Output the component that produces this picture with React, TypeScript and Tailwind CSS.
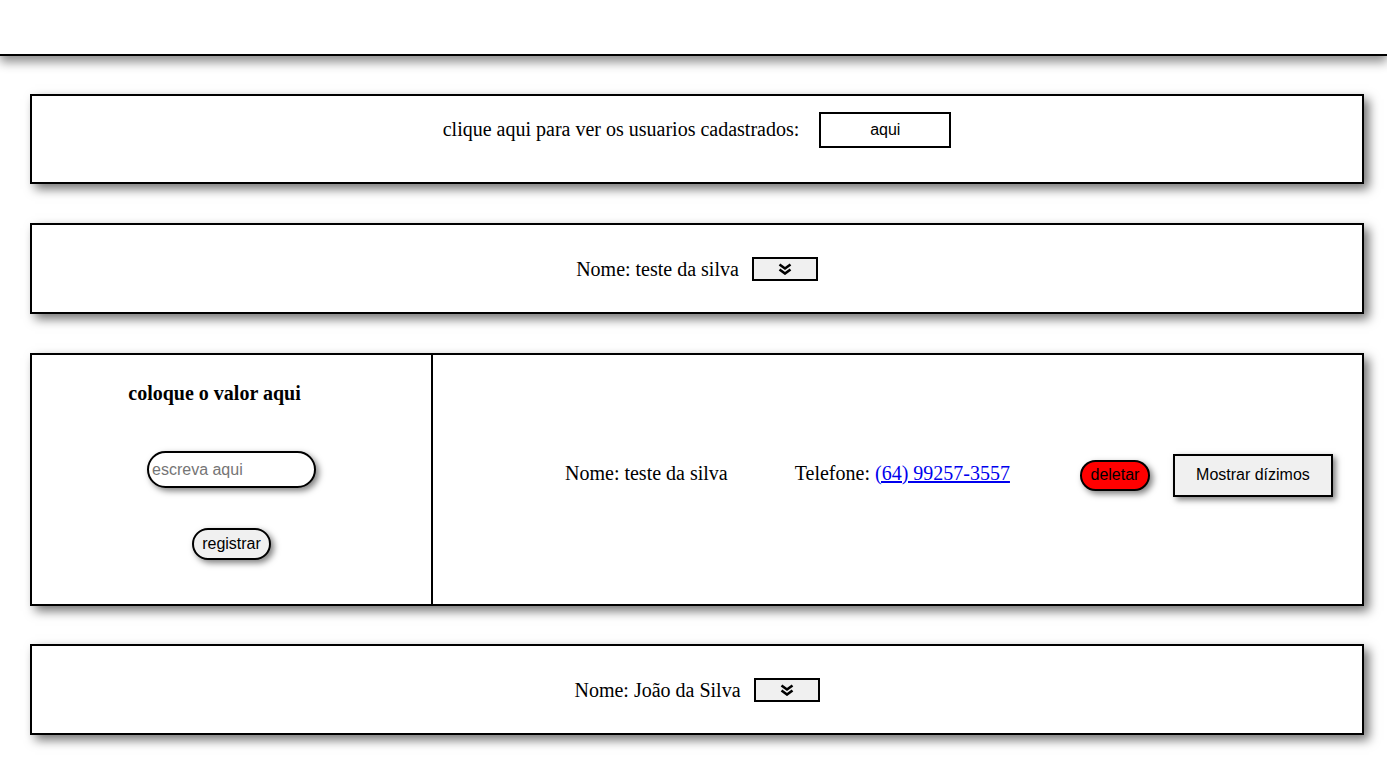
const serif = "font-['Liberation_Serif','Times_New_Roman',serif]"
const sans = "font-['Liberation_Sans',Arial,sans-serif]"
const card =
  "ml-[30px] w-[1334px] border-2 border-black bg-white shadow-[5px_5px_10px_rgba(0,0,0,0.55)]"

function ChevronsDown() {
  return (
    <svg width="14" height="12" viewBox="0 0 14 12" fill="none" stroke="black" strokeWidth="2.6">
      <path d="M1.5 1.5 L7 5.5 L12.5 1.5" />
      <path d="M1.5 6.5 L7 10.5 L12.5 6.5" />
    </svg>
  )
}

function UserRow({ nome, top }: { nome: string; top: string }) {
  return (
    <div className={`${card} ${top} h-[91px] flex items-center justify-center`}>
      <span className={`${serif} text-[20px] text-black`}>Nome: {nome}</span>
      <button className="ml-[13px] w-[66px] h-[24px] border-2 border-black bg-[#f0f0f0] flex items-center justify-center">
        <ChevronsDown />
      </button>
    </div>
  )
}

export default function App() {
  return (
    <main className="min-h-screen bg-white">
      <header className="h-[56px] w-full bg-white border-b-2 border-black shadow-[0_6px_10px_rgba(0,0,0,0.45)]" />

      <div className={`${card} mt-[38px] h-[90px] flex items-start justify-center pt-4`}>
        <span className={`${serif} text-[20px] text-black mt-[2px]`}>
          clique aqui para ver os usuarios cadastrados:
        </span>
        <button
          className={`${sans} ml-[20px] w-[132px] h-[36px] border-2 border-black bg-white text-[16px] text-black`}
        >
          aqui
        </button>
      </div>

      <UserRow nome="teste da silva" top="mt-[39px]" />

      <div className={`${card} mt-[39px] h-[253px] flex`}>
        <div className="w-[401px] border-r-2 border-black flex flex-col items-center">
          <h3 className={`${serif} mt-[23px] mr-[34px] text-[20px] font-bold text-black`}>
            coloque o valor aqui
          </h3>
          <input
            placeholder="escreva aqui"
            className={`${sans} mt-[43px] w-[169px] h-[37px] rounded-full border-2 border-black bg-white px-[3px] text-[16px] text-black placeholder:text-[#757575] shadow-[3px_3px_6px_rgba(0,0,0,0.5)] outline-none`}
          />
          <button
            className={`${sans} mt-[40px] h-[32px] px-[8px] rounded-full border-2 border-black bg-[#f0f0f0] text-[16px] text-black shadow-[3px_3px_6px_rgba(0,0,0,0.5)]`}
          >
            registrar
          </button>
        </div>

        <div className="flex-1 flex items-center pl-[132px] pb-[14px]">
          <span className={`${serif} text-[20px] text-black`}>Nome: teste da silva</span>
          <span className={`${serif} ml-[67px] text-[20px] text-black`}>
            Telefone:{" "}
            <a href="#" className="text-[#0000ee] underline">
              (64) 99257-3557
            </a>
          </span>
          <button
            className={`${sans} ml-[70px] mt-[5px] w-[70px] h-[31px] rounded-full border-2 border-black bg-[#ff0000] text-[16px] text-black shadow-[3px_3px_6px_rgba(0,0,0,0.5)]`}
          >
            deletar
          </button>
          <button
            className={`${sans} ml-[23px] mt-[5px] w-[160px] h-[43px] border-2 border-black bg-[#f0f0f0] text-[16px] text-black shadow-[3px_3px_6px_rgba(0,0,0,0.5)]`}
          >
            Mostrar dízimos
          </button>
        </div>
      </div>

      <UserRow nome="João da Silva" top="mt-[38px]" />
    </main>
  )
}
